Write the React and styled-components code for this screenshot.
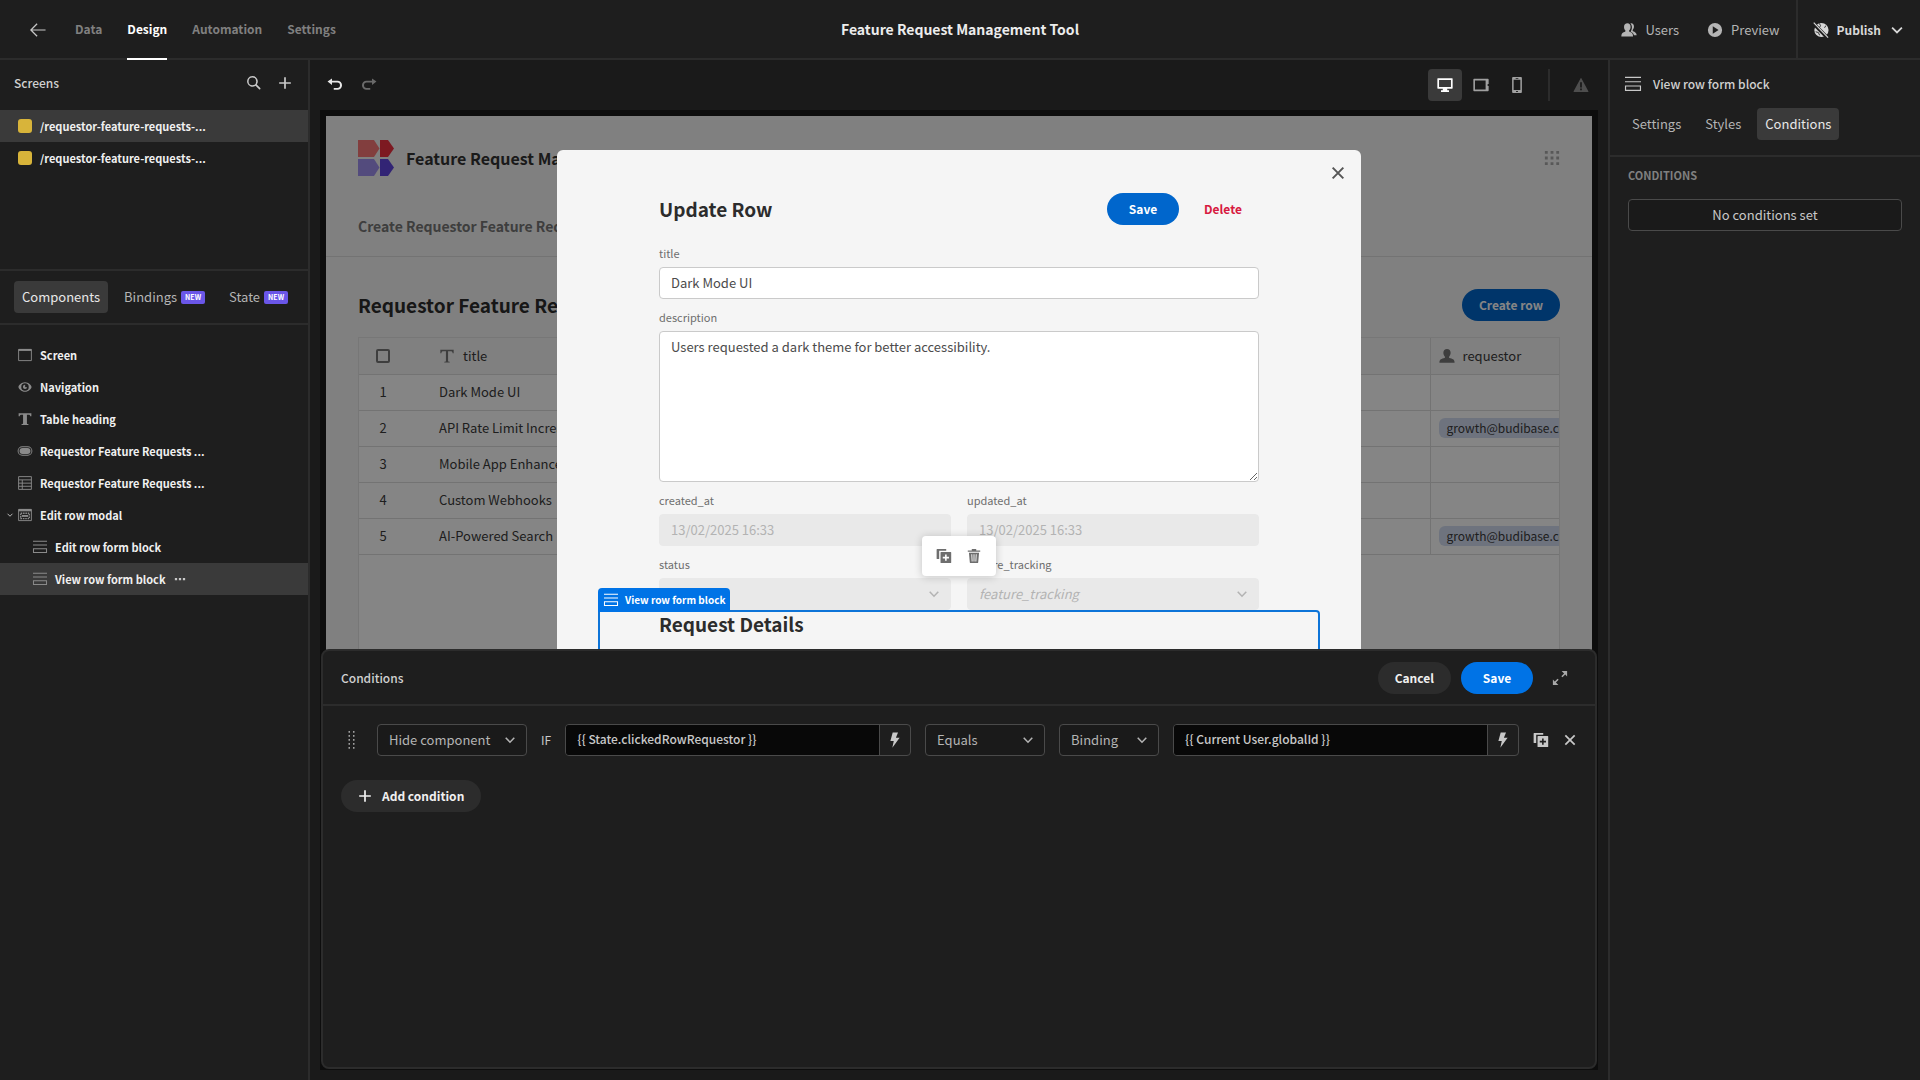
import React, { useState } from "react";
import styled, { createGlobalStyle } from "styled-components";

const screens = [
  { id: 1, route: "/requestor-feature-requests-..." },
  { id: 2, route: "/requestor-feature-requests-..." },
];

const components = [
  { id: 1, name: "Screen", icon: "screen" },
  { id: 2, name: "Navigation", icon: "eye" },
  { id: 3, name: "Table heading", icon: "text" },
  { id: 4, name: "Requestor Feature Requests ...", icon: "button" },
  { id: 5, name: "Requestor Feature Requests ...", icon: "table" },
  { id: 6, name: "Edit row modal", icon: "modal", open: true },
  { id: 7, name: "Edit row form block", icon: "form", nested: true },
  { id: 8, name: "View row form block", icon: "form", nested: true },
];

const rows = [
  { id: 1, title: "Dark Mode UI" },
  { id: 2, title: "API Rate Limit Increase", requestor: "growth@budibase.com" },
  { id: 3, title: "Mobile App Enhancements" },
  { id: 4, title: "Custom Webhooks" },
  { id: 5, title: "AI-Powered Search", requestor: "growth@budibase.com" },
];

const filled = {
  search: (
    <path
      fillRule="evenodd"
      d="M7.2 1.2a6 6 0 1 0 3.5 10.9l4 4a1 1 0 0 0 1.4-1.4l-4-4A6 6 0 0 0 7.2 1.2Zm0 1.7a4.3 4.3 0 1 1 0 8.6 4.3 4.3 0 0 1 0-8.6Z"
    />
  ),
  undo: (
    <path d="M5.6 1.6v2.6h6.2a5 5 0 0 1 0 10.2H7.6v-2.1h4a2.9 2.9 0 0 0 0-6H5.6v2.6L.6 5.2Z" />
  ),
  redo: (
    <path d="M12.4 1.6v2.6H6.2a5 5 0 0 0 0 10.2h4.2v-2.1h-4a2.9 2.9 0 0 1 0-6h6v2.6l5-3.7Z" />
  ),
  desktop: (
    <path
      fillRule="evenodd"
      d="M1 1.500h16a.6.600 0 0 1 .6.600v10.400a.6.600 0 0 1-.6.600h-5.500v1.900h2V17h-9v-2h2v-1.900H1a.6.600 0 0 1-.6-.6V2.100a.6.600 0 0 1 .6-.6Zm1.300 1.800v8h13.400v-8Z"
    />
  ),
  tablet: (
    <path
      fillRule="evenodd"
      d="M1.200 2h15.600a.8.800 0 0 1 .8.800V8h-1.100v2h1.100v5.200a.8.800 0 0 1-.8.800H1.200a.8.800 0 0 1-.8-.8V2.800A.8.800 0 0 1 1.200 2Zm1 1.800v10.400h12V3.800Z"
    />
  ),
  phone: (
    <path
      fillRule="evenodd"
      d="M4.500 0h9a1 1 0 0 1 1 1v16a1 1 0 0 1-1 1h-9a1 1 0 0 1-1-1V1a1 1 0 0 1 1-1Zm.7 3v11.600h7.600V3ZM7.500 1v1h3V1Zm.5 14.800v1h2v-1Z"
    />
  ),
  alert: (
    <path
      fillRule="evenodd"
      d="M9.400 1.300 17.300 16a.6.600 0 0 1-.5.900H1.200a.6.600 0 0 1-.5-.9L8.600 1.300a.5.500 0 0 1 .8 0ZM8 6v5.800h2V6Zm0 7v2h2v-2Z"
    />
  ),
  users: (
    <>
      <path d="M7.200 1.500c2.200 0 3.600 1.600 3.600 4 0 1.700-.7 3-1.500 3.900-.3.400-.2 1.500.2 1.700 2.300.8 4 1.700 4 4.400v.8H.4v-.8c0-2.700 1.800-3.600 4.200-4.400.4-.2.500-1.300.2-1.700-.8-.9-1.400-2.200-1.400-3.900 0-2.400 1.500-4 3.800-4Z" />
      <path d="M10.600 1.600c2.600-.6 4 1.400 4 3.600 0 1.500-.5 2.700-1.300 3.600-.3.400-.2 1.400.2 1.600 2.200.8 4.100 2 4.100 4.500h-3c-.5-2.300-2-3.300-3.700-4 .5-1.200 1.400-2.600 1.400-5 0-1.700-.6-3.300-1.700-4.300Z" />
    </>
  ),
  user: (
    <path d="M9 1c2.500 0 4.100 1.800 4.100 4.400 0 1.800-.7 3.200-1.600 4.100-.4.500-.3 1.500.2 1.700 3.300.7 5.800 1.700 5.800 4.800v.5H.5V16c0-3.100 2.500-4.100 5.800-4.800.5-.2.600-1.200.2-1.700-.9-.9-1.600-2.300-1.600-4.100C4.900 2.800 6.500 1 9 1Z" />
  ),
  play: (
    <path
      fillRule="evenodd"
      d="M9 1a8 8 0 1 0 0 16A8 8 0 0 0 9 1ZM6.500 4.700 13 9l-6.500 4.300Z"
    />
  ),
  globeOff: (
    <>
      <circle cx="9.500" cy="9" r="8" />
      <g fill="none" stroke="#1e1e1e">
        <path d="M7 1.500 8.500 4l-1.200 2.200M3 11l3 .8 1.500 3.200M14.500 4l-1.500 2.500" />
        <path d="m0 1 17 17.500" strokeWidth="4" />
      </g>
      <path d="m.8.800 16.200 16.700" stroke="currentColor" strokeWidth="1.300" />
    </>
  ),
  bolt: <path d="M6.400.5h6L10 6.500h4.200L6 17.800 7.600 10H3.800Z" />,
  duplicate: (
    <path
      fillRule="evenodd"
      d="M1.300 1h10.200v2H3.600v9.500H1.300a.6.600 0 0 1-.6-.6V1.600a.6.600 0 0 1 .6-.6Zm4.400 3.500h10.800a.6.600 0 0 1 .6.600v11.300a.6.600 0 0 1-.6.600H5.700a.6.600 0 0 1-.6-.6V5.100a.6.600 0 0 1 .6-.6Zm4.500 2.800v2.600H7.600v1.800h2.600v2.600H12v-2.600h2.600V9.900H12V7.300Z"
    />
  ),
  trash: (
    <path
      fillRule="evenodd"
      d="M6.500 1h5v1.800H16v1.400H2V2.800h4.500ZM3.300 5.300h11.400l-1 11.100a.8.800 0 0 1-.8.600H5.100a.8.800 0 0 1-.8-.6ZM6 7l.4 8.200h1L7 7Zm2.500 0v8.200h1V7ZM11 7l-.4 8.200h1L12 7Z"
    />
  ),
  text: (
    <path d="M.8 1.500h16.400v4h-1.500c-.2-1.500-.8-2-2.500-2h-1.700v11c0 .8.500 1 2 1.100v1.200h-9v-1.200c1.500-.1 2-.3 2-1.100v-11H4.800c-1.700 0-2.300.5-2.500 2H.8Z" />
  ),
  textLight: (
    <path d="M1.500 2h15v3.800h-1.200c-.2-1.500-.7-2.100-2.300-2.100h-2.800v10.600c0 .8.400 1 1.900 1.100v1H5.900v-1c1.500-.1 1.900-.3 1.900-1.100V3.700H5c-1.600 0-2.100.6-2.300 2.100H1.500Z" />
  ),
  eye: (
    <path
      fillRule="evenodd"
      d="M9 2.800C4.500 2.800.6 6.800.6 9s3.900 6.200 8.400 6.200 8.400-4 8.400-6.200S13.500 2.800 9 2.800Zm0 1.400a4.800 4.800 0 1 1 0 9.600 4.800 4.800 0 0 1 0-9.600Zm.6 2.100A2.700 2.700 0 1 0 11.700 9 1.500 1.500 0 0 1 9.600 6.300Z"
    />
  ),
  grid: (
    <path d="M1 1h3.200v3.200H1Zm6.400 0h3.200v3.200H7.400Zm6.400 0H17v3.200h-3.200ZM1 7.400h3.200v3.200H1Zm6.400 0h3.200v3.200H7.400Zm6.400 0H17v3.200h-3.200ZM1 13.800h3.200V17H1Zm6.400 0h3.200V17H7.400Zm6.400 0H17V17h-3.200Z" />
  ),
  drag: (
    <path d="M5.500 0h1.500v1.800H5.500Zm4.500 0h1.500v1.800H10ZM5.500 4h1.500v1.800H5.500ZM10 4h1.500v1.800H10ZM5.500 8h1.500v1.800H5.500ZM10 8h1.500v1.800H10Zm-4.500 4h1.500v1.800H5.500Zm4.500 0h1.500v1.800H10Zm-4.500 4h1.500v1.800H5.500Zm4.500 0h1.500v1.800H10Z" />
  ),
  expand: (
    <path d="M10.800 1H17v6.200l-2.100-2.100-3.100 3.100-1.300-1.300 3.100-3.100ZM1 10.800l2.100 2.100 3.100-3.100 1.300 1.300-3.100 3.100L7.200 17H1Z" />
  ),
  more: (
    <path d="M1.300 7.500h3.400v3.400H1.300Zm6 0h3.400v3.400H7.300Zm6 0h3.400v3.400h-3.400Z" />
  ),
  button: (
    <>
      <path
        fillRule="evenodd"
        d="M5.500 3h7a6 6 0 0 1 0 12h-7a6 6 0 0 1 0-12Zm0 1.200a4.800 4.800 0 0 0 0 9.600h7a4.800 4.800 0 0 0 0-9.600Z"
      />
      <rect x="2" y="5.200" width="14" height="7.600" rx="3.800" />
    </>
  ),
};

const stroked = {
  back: <path d="M17.500 9H1.500M8 2 1 9l7 7" strokeWidth="1.400" />,
  plus: <path d="M9 1.500v15M1.500 9h15" strokeWidth="2.200" />,
  cross: <path d="m3 3 12 12M15 3 3 15" strokeWidth="2.200" />,
  chevron: <path d="m3.500 6.200 5.500 5.600 5.500-5.600" strokeWidth="2" />,
  screen: (
    <>
      <path d="M.8 1.800h16.400v14.400H.8Z" strokeWidth="1.200" />
      <path d="M.8 2.500h16.400" strokeWidth="2.500" />
    </>
  ),
  table: (
    <path
      d="M.8.800h16.400v16.400H.8ZM.8 5h16.400M.8 9.200h16.400M.8 13.200h16.400M5.500 5v12"
      strokeWidth="1.200"
    />
  ),
  modal: (
    <>
      <path d="M.8 1.800h16.400v14.400H.8Z" strokeWidth="1.200" />
      <path d="M.8 2.800h16.400" strokeWidth="3" />
      <path
        d="M3.500 6.800h11v6.800h-11Z"
        strokeWidth="1.800"
        strokeDasharray="2 1"
      />
      <path d="M5 10.200h8" strokeWidth="2.500" />
    </>
  ),
  form: (
    <path d="M0 1.600h18M0 6.500h18M.6 11.200h16.800v5H.6Z" strokeWidth="1.300" />
  ),
};

const Icon = ({ name, size = 16, color }) => (
  <Svg
    viewBox="0 0 18 18"
    $size={size}
    $color={color}
    fill={filled[name] ? "currentColor" : "none"}
    stroke={filled[name] ? "none" : "currentColor"}
    aria-hidden="true"
  >
    {filled[name] || stroked[name]}
  </Svg>
);

const Select = ({ label, value, width, light, italic }) => (
  <SelectWrap $width={width} $light={light}>
    <select aria-label={label} disabled={light} defaultValue={value}>
      <option>{value}</option>
    </select>
    {italic && <Placeholder>{italic}</Placeholder>}
    <Icon name="chevron" size={14} />
  </SelectWrap>
);

const BindingInput = ({ label, value }) => (
  <Binding>
    <input aria-label={label} defaultValue={value} />
    <button aria-label="Open bindings">
      <Icon name="bolt" size={16} />
    </button>
  </Binding>
);

const TopBar = () => (
  <Header>
    <Nav>
      <BackLink href="#" aria-label="Back">
        <Icon name="back" size={16} />
      </BackLink>
      <NavLink href="#">Data</NavLink>
      <NavLink href="#" $active>
        Design
      </NavLink>
      <NavLink href="#">Automation</NavLink>
      <NavLink href="#">Settings</NavLink>
    </Nav>
    <AppName>Feature Request Management Tool</AppName>
    <Actions>
      <Action>
        <Icon name="users" />
        Users
      </Action>
      <Action>
        <Icon name="play" />
        Preview
      </Action>
      <Action $publish>
        <Icon name="globeOff" />
        Publish
        <Icon name="chevron" size={16} />
      </Action>
    </Actions>
  </Header>
);

const LeftPanel = () => {
  const [screen, setScreen] = useState(1);
  const [selected, setSelected] = useState(8);
  return (
    <Side>
      <Screens>
        <ScreensHead>
          <PanelTitle>Screens</PanelTitle>
          <IconButton aria-label="Search screens">
            <Icon name="search" />
          </IconButton>
          <IconButton aria-label="Add screen">
            <Icon name="plus" size={14} />
          </IconButton>
        </ScreensHead>
        {screens.map((s) => (
          <TreeItem
            key={s.id}
            $selected={s.id === screen}
            onClick={() => setScreen(s.id)}
          >
            <Swatch />
            <TreeLabel>{s.route}</TreeLabel>
          </TreeItem>
        ))}
      </Screens>
      <Tabs $bordered>
        <Tab $active>Components</Tab>
        <Tab>
          Bindings <Badge>NEW</Badge>
        </Tab>
        <Tab>
          State <Badge>NEW</Badge>
        </Tab>
      </Tabs>
      <Tree>
        {components.map((c) => (
          <TreeItem
            key={c.id}
            $nested={c.nested}
            $selected={c.id === selected}
            onClick={() => setSelected(c.id)}
          >
            {c.open && (
              <Caret>
                <Icon name="chevron" size={8} />
              </Caret>
            )}
            <Icon name={c.icon} size={14} color="#8a8a8a" />
            <TreeLabel>{c.name}</TreeLabel>
            {c.id === selected && <Icon name="more" size={12} color="#c8c8c8" />}
          </TreeItem>
        ))}
      </Tree>
    </Side>
  );
};

const AppPreview = () => (
  <Preview>
    <PreviewHead>
      <Brand>
        <svg width="36" height="36" viewBox="0 0 36 36" aria-hidden="true">
          <path fill="#f97777" d="M0 0h16l5.500 8.500L16 17H0Z" />
          <path fill="#f03040" d="M22 0h8l6 8.500L30 17h-8Z" />
          <path fill="#a090f0" d="M0 19h16l5.500 8.500L16 36H0Z" />
          <path fill="#6045e0" d="M22 19h8l6 8.500L30 36h-8Z" />
        </svg>
        <BrandName>Feature Request Management Tool</BrandName>
        <Icon name="grid" size={16} color="#aaa" />
      </Brand>
      <PreviewLink href="#">Create Requestor Feature Requests</PreviewLink>
    </PreviewHead>
    <PreviewBody>
      <HeadingRow>
        <Heading>Requestor Feature Requests</Heading>
        <Pill $kind="primary">Create row</Pill>
      </HeadingRow>
      <TableWrap>
        <Table>
          <colgroup>
            <col width="72" />
            <col />
            <col width="129" />
          </colgroup>
          <thead>
            <tr>
              <th>
                <Check type="checkbox" aria-label="Select all rows" />
              </th>
              <th>
                <ColumnName>
                  <Icon name="textLight" color="#777" /> title
                </ColumnName>
              </th>
              <th>
                <ColumnName>
                  <Icon name="user" color="#777" /> requestor
                </ColumnName>
              </th>
            </tr>
          </thead>
          <tbody>
            {rows.map((row) => (
              <tr key={row.id}>
                <td>{row.id}</td>
                <td>{row.title}</td>
                <td>{row.requestor && <UserChip>{row.requestor}</UserChip>}</td>
              </tr>
            ))}
          </tbody>
        </Table>
      </TableWrap>
    </PreviewBody>
    <Backdrop>
      <Modal>
        <CloseButton aria-label="Close">
          <Icon name="cross" size={16} />
        </CloseButton>
        <ModalHead>
          <Heading>Update Row</Heading>
          <Pill $kind="primary">Save</Pill>
          <Pill $kind="danger">Delete</Pill>
        </ModalHead>
        <Fields>
          <Field $wide>
            <span>title</span>
            <input defaultValue="Dark Mode UI" />
          </Field>
          <Field $wide>
            <span>description</span>
            <textarea defaultValue="Users requested a dark theme for better accessibility." />
          </Field>
          <Field>
            <span>created_at</span>
            <input disabled defaultValue="13/02/2025 16:33" />
          </Field>
          <Field>
            <span>updated_at</span>
            <input disabled defaultValue="13/02/2025 16:33" />
          </Field>
          <Field as="div">
            <span>status</span>
            <Select label="status" light />
          </Field>
          <Field as="div">
            <span>feature_tracking</span>
            <Select label="feature_tracking" light italic="feature_tracking" />
          </Field>
        </Fields>
        <SelectedBlock>
          <BlockTag>
            <Icon name="form" size={14} />
            View row form block
          </BlockTag>
          <BlockTools>
            <IconButton aria-label="Duplicate component">
              <Icon name="duplicate" color="#6e6e6e" />
            </IconButton>
            <IconButton aria-label="Delete component">
              <Icon name="trash" color="#6e6e6e" />
            </IconButton>
          </BlockTools>
          <Heading>Request Details</Heading>
        </SelectedBlock>
      </Modal>
    </Backdrop>
  </Preview>
);

const ConditionsDrawer = () => (
  <Drawer>
    <DrawerHead>
      <PanelTitle>Conditions</PanelTitle>
      <Pill $kind="dark">Cancel</Pill>
      <Pill $kind="cta">Save</Pill>
      <ExpandButton aria-label="Expand">
        <Icon name="expand" size={16} color="#a8a8a8" />
      </ExpandButton>
    </DrawerHead>
    <DrawerBody>
      <Condition>
        <Handle>
          <Icon name="drag" size={18} />
        </Handle>
        <Select label="Action" value="Hide component" width={150} />
        <Conjunction>IF</Conjunction>
        <BindingInput label="Value" value="{{ State.clickedRowRequestor }}" />
        <Select label="Operator" value="Equals" width={120} />
        <Select label="Value type" value="Binding" width={100} />
        <BindingInput label="Reference" value="{{ Current User.globalId }}" />
        <IconButton aria-label="Duplicate condition">
          <Icon name="duplicate" />
        </IconButton>
        <IconButton aria-label="Remove condition">
          <Icon name="cross" size={14} />
        </IconButton>
      </Condition>
      <Pill $kind="dark">
        <Icon name="plus" size={14} />
        Add condition
      </Pill>
    </DrawerBody>
  </Drawer>
);

const RightPanel = () => (
  <Side $right>
    <SettingsHead>
      <Icon name="form" size={16} />
      <PanelTitle>View row form block</PanelTitle>
    </SettingsHead>
    <Tabs>
      <Tab>Settings</Tab>
      <Tab>Styles</Tab>
      <Tab $active>Conditions</Tab>
    </Tabs>
    <Section>
      <SectionTitle>CONDITIONS</SectionTitle>
      <OutlineButton>No conditions set</OutlineButton>
    </Section>
  </Side>
);

const App = () => {
  const [device, setDevice] = useState("desktop");
  return (
    <Page>
      <GlobalStyle />
      <TopBar />
      <Builder>
        <LeftPanel />
        <Canvas>
          <Toolbar>
            <IconButton aria-label="Undo">
              <Icon name="undo" color="#e8e8e8" />
            </IconButton>
            <IconButton aria-label="Redo">
              <Icon name="redo" color="#6a6a6a" />
            </IconButton>
            <Devices>
              {["desktop", "tablet", "phone"].map((d) => (
                <Device
                  key={d}
                  aria-label={d}
                  $active={d === device}
                  onClick={() => setDevice(d)}
                >
                  <Icon name={d} />
                </Device>
              ))}
            </Devices>
            <IconButton aria-label="Warnings">
              <Icon name="alert" color="#4e4e4e" />
            </IconButton>
          </Toolbar>
          <AppPreview />
          <ConditionsDrawer />
        </Canvas>
        <RightPanel />
      </Builder>
    </Page>
  );
};

export default App;

const GlobalStyle = createGlobalStyle`
  * {
    box-sizing: border-box;
  }
  body {
    margin: 0;
    background: #1e1e1e;
  }
  body, button, input, textarea, select {
    font-family: "Noto Sans CJK SC", "Noto Sans", sans-serif;
    font-size: 13px;
    line-height: 20px;
    color: #c8c8c8;
  }
  button {
    margin: 0;
    padding: 0;
    border: 0;
    background: none;
    cursor: pointer;
  }
  a {
    color: inherit;
    text-decoration: none;
  }
`;
const Svg = styled.svg`
  display: block;
  flex: none;
  overflow: visible;
  width: ${(props) => props.$size}px;
  height: ${(props) => props.$size}px;
  color: ${(props) => props.$color || "inherit"};
`;
const Page = styled.div`
  display: flex;
  flex-direction: column;
  height: 100vh;
`;
const Header = styled.header`
  display: grid;
  grid-template-columns: 1fr auto 1fr;
  flex: none;
  height: 60px;
  border-bottom: 2px solid #2c2c2c;
`;
const Nav = styled.nav`
  display: flex;
  gap: 25px;
  padding-left: 30px;
`;
const BackLink = styled.a`
  display: flex;
  align-items: center;
  margin-right: 4px;
`;
const NavLink = styled.a`
  display: flex;
  align-items: center;
  height: 60px;
  font-size: 12px;
  font-weight: 600;
  color: ${(props) => (props.$active ? "#fff" : "#808080")};
  border-bottom: 2px solid
    ${(props) => (props.$active ? "#fff" : "transparent")};
`;
const AppName = styled.h1`
  margin: 0;
  font-size: 14px;
  line-height: 58px;
  font-weight: 600;
  color: #ececec;
`;
const Actions = styled.div`
  display: flex;
  justify-content: flex-end;
`;
const Action = styled.button`
  display: flex;
  align-items: center;
  gap: 8px;
  margin-right: ${(props) => (props.$publish ? 0 : 16)}px;
  padding: ${(props) => (props.$publish ? "0 15px 0 15px" : "0 0 0 12px")};
  border-left: ${(props) => (props.$publish ? "2px solid #2c2c2c" : 0)};
  font-size: ${(props) => (props.$publish ? 12 : 13)}px;
  font-weight: ${(props) => (props.$publish ? 600 : 400)};
  color: ${(props) => (props.$publish ? "#d8d8d8" : "#b4b4b4")};
`;
const Builder = styled.div`
  display: flex;
  flex: 1;
  min-height: 0;
`;
const Side = styled.aside`
  flex: none;
  width: ${(props) => (props.$right ? 312 : 310)}px;
  border-${(props) => (props.$right ? "left" : "right")}: 2px solid #2c2c2c;
`;
const Screens = styled.section`
  height: 211px;
  border-bottom: 2px solid #2c2c2c;
`;
const ScreensHead = styled.div`
  display: flex;
  align-items: center;
  gap: 16px;
  height: 50px;
  padding: 0 16px 4px 14px;
`;
const PanelTitle = styled.h2`
  flex: 1;
  margin: 0;
  font-size: 12px;
  font-weight: 500;
  color: #d0d0d0;
`;
const IconButton = styled.button`
  display: flex;
  align-items: center;
  justify-content: center;
`;
const TreeItem = styled.button`
  position: relative;
  display: flex;
  align-items: center;
  gap: 8px;
  width: 100%;
  height: 32px;
  padding-left: ${(props) => (props.$nested ? 33 : 18)}px;
  text-align: left;
  background: ${(props) => (props.$selected ? "#3a3a3a" : "transparent")};
`;
const TreeLabel = styled.span`
  white-space: nowrap;
  font-size: 11px;
  font-weight: 700;
  color: #f0f0f0;
`;
const Caret = styled.span`
  position: absolute;
  left: 6px;
`;
const Swatch = styled.span`
  width: 14px;
  height: 14px;
  border-radius: 3px;
  background: #d8b43a;
`;
const Tabs = styled.div`
  display: flex;
  gap: 8px;
  padding: ${(props) => (props.$bordered ? "10px 14px" : "0 14px 15px")};
  border-bottom: 2px solid #2c2c2c;
`;
const Tab = styled.button`
  display: flex;
  align-items: center;
  gap: 4px;
  height: 32px;
  padding: 0 8px;
  border-radius: 4px;
  color: ${(props) => (props.$active ? "#e8e8e8" : "#b4b4b4")};
  background: ${(props) => (props.$active ? "#3a3a3a" : "transparent")};
`;
const Badge = styled.span`
  padding: 0 4px;
  border-radius: 2px;
  font-size: 7px;
  line-height: 13px;
  font-weight: 700;
  color: #fff;
  background: #6a56e8;
`;
const Tree = styled.div`
  padding-top: 14px;
`;
const Canvas = styled.main`
  position: relative;
  display: flex;
  flex-direction: column;
  flex: 1;
  min-width: 0;
  padding: 0 10px 10px;
  background: #1a1a1a;
`;
const Toolbar = styled.div`
  display: flex;
  align-items: center;
  gap: 18px;
  flex: none;
  height: 50px;
  padding: 0 9px 0 7px;
`;
const Devices = styled.div`
  display: flex;
  gap: 2px;
  margin-left: auto;
  margin-right: 5px;
  padding-right: 14px;
  border-right: 2px solid #2c2c2c;
`;
const Device = styled.button`
  display: flex;
  align-items: center;
  justify-content: center;
  width: 34px;
  height: 32px;
  border-radius: 4px;
  color: ${(props) => (props.$active ? "#fff" : "#a0a0a0")};
  background: ${(props) => (props.$active ? "#3a3a3a" : "transparent")};
`;
const Preview = styled.div`
  position: relative;
  display: flex;
  flex-direction: column;
  flex: 1;
  min-height: 0;
  overflow: hidden;
  border: 6px solid #0d0d0d;
  background: #f5f5f5;
  color: #333;
`;
const PreviewHead = styled.div`
  display: flex;
  flex-direction: column;
  gap: 40px;
  padding: 24px 32px 20px;
  border-bottom: 1px solid #dcdcdc;
`;
const Brand = styled.div`
  display: flex;
  align-items: center;
  gap: 12px;
`;
const BrandName = styled.span`
  flex: 1;
  font-size: 16px;
  font-weight: 600;
`;
const PreviewLink = styled.a`
  font-size: 14px;
  font-weight: 600;
  color: #777;
`;
const PreviewBody = styled.div`
  display: flex;
  flex-direction: column;
  flex: 1;
  gap: 16px;
  padding: 32px 32px 0;
`;
const HeadingRow = styled.div`
  display: flex;
  align-items: center;
`;
const Heading = styled.h3`
  flex: 1;
  margin: 0;
  font-size: 19px;
  line-height: 24px;
  font-weight: 600;
  color: #2c2c2c;
`;
const pillColors = {
  primary: ["#0066cc", "#fff"],
  cta: ["#0073e6", "#fff"],
  danger: ["transparent", "#d7193f"],
  dark: ["#2c2c2c", "#f0f0f0"],
};
const Pill = styled.button`
  display: flex;
  align-items: center;
  justify-content: center;
  gap: 10px;
  min-width: 72px;
  height: 32px;
  padding: 0 17px;
  border-radius: 16px;
  font-size: 12px;
  font-weight: 700;
  background: ${(props) => pillColors[props.$kind][0]};
  color: ${(props) => pillColors[props.$kind][1]};
`;
const TableWrap = styled.div`
  flex: 1;
  overflow: hidden;
  border: 1px solid #e4e4e4;
  background: #fff;
`;
const Table = styled.table`
  width: 100%;
  table-layout: fixed;
  border-collapse: collapse;
  th,
  td {
    height: 36px;
    padding: 0 0 0 8px;
    overflow: hidden;
    white-space: nowrap;
    text-align: left;
    font-weight: 400;
    color: #3a3a3a;
    border-bottom: 1px solid #dcdcdc;
  }
  th {
    background: #f5f5f5;
  }
  th:first-child,
  td:first-child {
    padding: 0 24px 0 0;
    text-align: center;
  }
  th:last-child,
  td:last-child {
    border-left: 1px solid #dcdcdc;
  }
`;
const Check = styled.input`
  appearance: none;
  display: block;
  width: 14px;
  height: 14px;
  margin: 0 0 0 17px;
  border: 2px solid #777;
  border-radius: 2px;
`;
const ColumnName = styled.span`
  display: flex;
  align-items: center;
  gap: 8px;
`;
const UserChip = styled.span`
  display: inline-block;
  padding: 0 8px;
  border-radius: 6px;
  font-size: 12px;
  background: #d3ddf2;
`;
const Backdrop = styled.div`
  position: absolute;
  inset: 0;
  padding: 34px 20px 0;
  overflow: hidden;
  background: rgba(0, 0, 0, 0.48);
`;
const Modal = styled.div`
  position: relative;
  max-width: 804px;
  min-height: 100%;
  margin: 0 auto;
  padding: 43px 102px;
  border-radius: 6px;
  background: #f5f5f5;
`;
const CloseButton = styled.button`
  position: absolute;
  top: 15px;
  right: 15px;
  color: #555;
`;
const ModalHead = styled.div`
  display: flex;
  align-items: center;
  gap: 8px;
  margin-bottom: 18px;
`;
const Fields = styled.div`
  display: grid;
  grid-template-columns: 1fr 1fr;
  gap: 8px 16px;
`;
const Field = styled.label`
  grid-column: ${(props) => (props.$wide ? "1 / -1" : "auto")};
  display: flex;
  flex-direction: column;
  > span {
    padding-bottom: 4px;
    font-size: 11px;
    line-height: 20px;
    color: #6e6e6e;
  }
  input,
  textarea {
    display: block;
    width: 100%;
    height: 32px;
    padding: 0 11px 2px;
    border: 1px solid #cacaca;
    border-radius: 4px;
    background: #fff;
    color: #4b4b4b;
  }
  textarea {
    height: 151px;
    padding-top: 5px;
    resize: vertical;
  }
  input:disabled {
    border-color: #e9e9e9;
    background: #e9e9e9;
    color: #b3b3b3;
  }
`;
const SelectWrap = styled.div`
  position: relative;
  display: flex;
  align-items: center;
  flex: none;
  width: ${(props) => (props.$width ? `${props.$width}px` : "100%")};
  color: ${(props) => (props.$light ? "#b3b3b3" : "#b4b4b4")};
  select {
    appearance: none;
    width: 100%;
    height: 32px;
    padding: 0 11px;
    opacity: 1;
    border: 1px solid ${(props) => (props.$light ? "#e9e9e9" : "#4a4a4a")};
    border-radius: 4px;
    color: inherit;
    background: ${(props) => (props.$light ? "#e9e9e9" : "#1a1a1a")};
  }
  svg {
    position: absolute;
    right: 10px;
    pointer-events: none;
  }
`;
const Placeholder = styled.em`
  position: absolute;
  left: 12px;
`;
const SelectedBlock = styled.section`
  position: relative;
  height: 260px;
  margin: 0 -61px;
  padding: 0 59px;
  border: 2px solid #0d74d8;
  border-radius: 0 4px 4px 4px;
`;
const BlockTag = styled.span`
  position: absolute;
  left: -2px;
  bottom: 100%;
  display: flex;
  align-items: center;
  gap: 7px;
  height: 24px;
  padding: 0 4px 0 6px;
  border-radius: 4px 4px 0 0;
  font-size: 10px;
  font-weight: 700;
  color: #fff;
  background: #0073e6;
`;
const BlockTools = styled.div`
  position: absolute;
  left: 50%;
  bottom: calc(100% + 36px);
  display: flex;
  gap: 14px;
  padding: 12px 14px;
  border-radius: 4px;
  background: #fff;
  box-shadow: 0 1px 8px rgba(0, 0, 0, 0.2);
  transform: translateX(-50%);
`;
const Drawer = styled.section`
  position: absolute;
  left: 11px;
  right: 11px;
  bottom: 11px;
  height: 420px;
  border: 2px solid #2c2c2c;
  border-radius: 8px;
  background: #1e1e1e;
`;
const DrawerHead = styled.div`
  display: flex;
  align-items: center;
  gap: 10px;
  height: 55px;
  padding: 0 18px;
  border-bottom: 2px solid #2c2c2c;
`;
const ExpandButton = styled(IconButton)`
  width: 34px;
  height: 32px;
`;
const DrawerBody = styled.div`
  display: flex;
  flex-direction: column;
  align-items: flex-start;
  gap: 24px;
  padding: 18px;
`;
const Condition = styled.div`
  display: flex;
  align-items: center;
  gap: 14px;
  width: 100%;
`;
const Conjunction = styled.span`
  font-size: 12px;
`;
const Handle = styled.span`
  display: flex;
  justify-content: center;
  width: 22px;
  color: #a0a0a0;
`;
const Binding = styled.div`
  display: flex;
  flex: 1;
  height: 32px;
  min-width: 0;
  overflow: hidden;
  border: 1px solid #4a4a4a;
  border-radius: 4px;
  input {
    flex: 1;
    min-width: 0;
    padding: 0 11px 2px;
    border: 0;
    font-size: 12px;
    font-weight: 500;
    background: #080808;
  }
  button {
    display: flex;
    align-items: center;
    justify-content: center;
    width: 31px;
    border-left: 1px solid #4a4a4a;
  }
`;
const SettingsHead = styled.div`
  display: flex;
  align-items: center;
  gap: 12px;
  height: 48px;
  padding: 0 15px;
`;
const Section = styled.div`
  display: flex;
  flex-direction: column;
  gap: 14px;
  padding: 8px 18px;
`;
const SectionTitle = styled.h3`
  margin: 0;
  font-size: 11px;
  font-weight: 600;
  color: #808080;
`;
const OutlineButton = styled.button`
  height: 32px;
  border: 1px solid #4a4a4a;
  border-radius: 4px;
  background: #1a1a1a;
`;
